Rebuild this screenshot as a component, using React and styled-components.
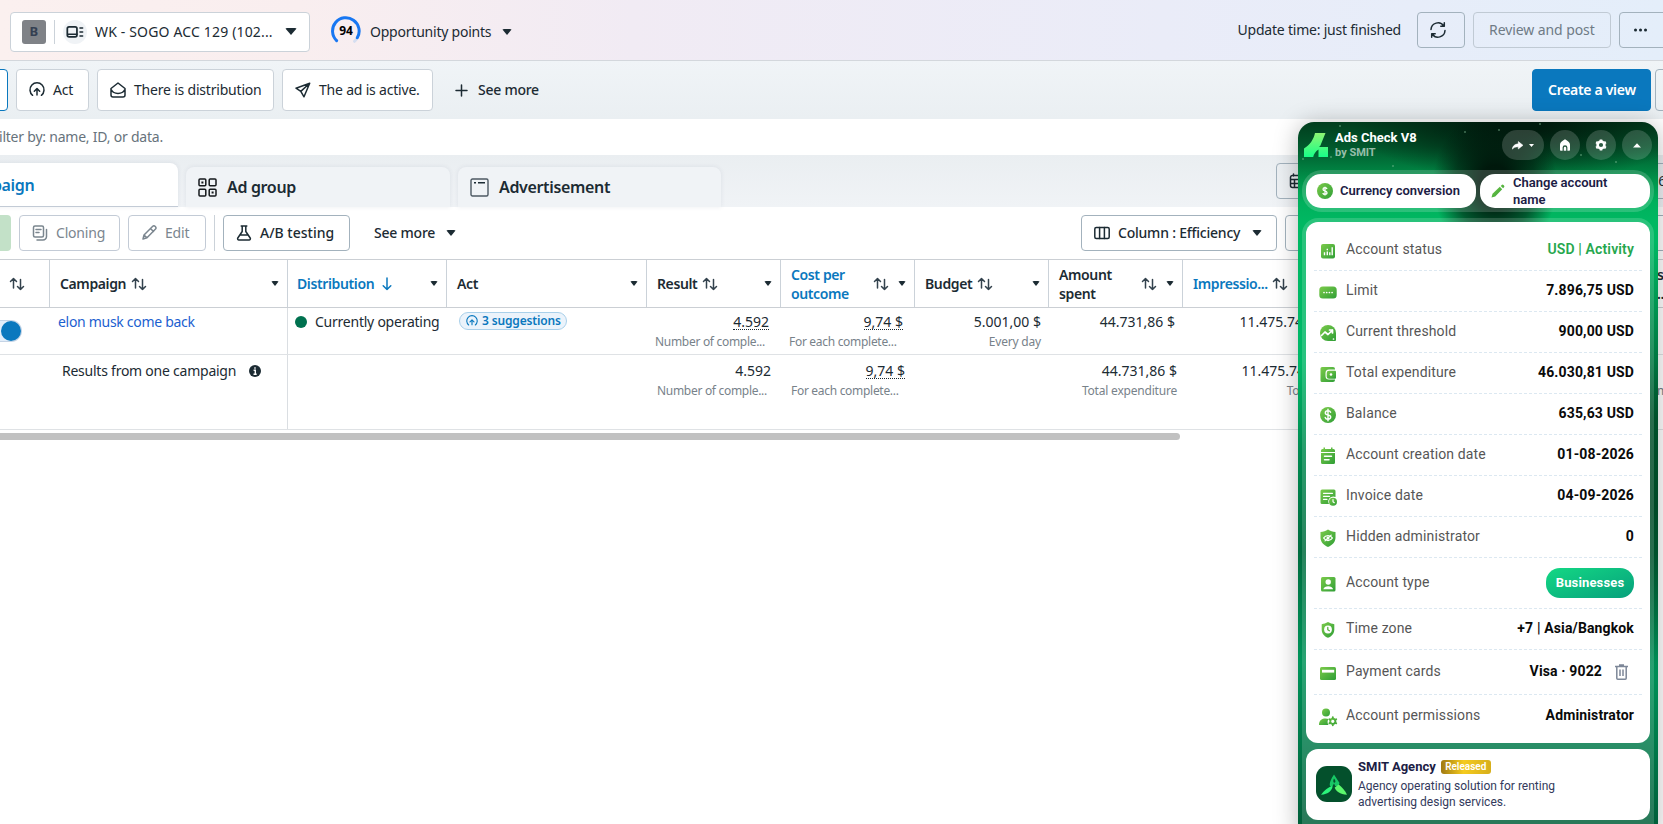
import React from 'react';
import styled, { createGlobalStyle } from 'styled-components';

const GlobalStyle = createGlobalStyle`
    * {
        box-sizing: border-box;
    }

    body {
        margin: 0;
        background: #fff;
        color: #1c2b33;
        font: 14px/20px "Noto Sans", "Open Sans", sans-serif;
        letter-spacing: -0.22px;
        overflow: hidden;
    }
`;

const Page = styled.div`
    position: relative;
    width: 1663px;
    height: 824px;
    overflow: hidden;
    white-space: nowrap;
`;

const Row = styled.div`
    display: flex;
    align-items: center;
`;

const TopBar = styled(Row)`
    height: 61px;
    padding: 0 0 1px 10px;
    border-bottom: 1px solid #d3d7dc;
    background: linear-gradient(90deg, #fbf0ef 0%, #f9eeef 18%, #f1ebf4 38%, #eaecf8 70%, #e4eefa 100%);
`;

const AccountSelect = styled(Row)`
    width: 300px;
    height: 40px;
    margin-top: 4px;
    padding-left: 11px;
    border: 1px solid #cbd2d9;
    border-radius: 4px;
    background: #fff;
    letter-spacing: 0.16px;
`;

const Badge = styled.span`
    width: 24px;
    height: 24px;
    border-radius: 3px;
    background: #7f8287;
    color: #343f52;
    font-size: 13px;
    font-weight: 700;
    line-height: 23px;
    text-align: center;
`;

const BadgeRule = styled.span`
    width: 1px;
    height: 24px;
    margin: 0 8px;
    background: #cbd2d9;
`;

const Round = styled(Row)`
    justify-content: center;
    width: 24px;
    height: 24px;
    margin-right: 8px;
    border-radius: 50%;
    background: #f0f3f6;
`;

const Caret = styled.span`
    width: 0;
    height: 0;
    flex: none;
    margin-left: ${props => props.$left || 0}px;
    border: ${props => props.$size || 5}px solid transparent;
    border-top: ${props => (props.$size || 5) + 1}px solid #1c2b33;
    border-bottom: 0;
    border-radius: 2px;
`;

const Score = styled(Row)`
    margin: 4px 0 0 21px;
`;

const Ring = styled.span`
    display: grid;
    width: 30px;
    height: 30px;
    margin: -1px 9px 0 0;
    place-items: center;
    color: #000;
    font-size: 12px;
    font-weight: 700;

    > * {
        grid-area: 1 / 1;
    }
`;

const Button = styled.div`
    display: flex;
    flex: none;
    align-items: center;
    gap: ${props => props.$gap || 8}px;
    width: ${props => props.$w}px;
    height: ${props => props.$h || 36}px;
    padding-left: ${props => props.$pad === undefined ? 12 : props.$pad}px;
    border: 1px solid ${props => props.$line || "#a3b2bd"};
    border-radius: 4px;
    background: ${props => props.$bg || "transparent"};
    color: ${props => props.$color || "#1c2b33"};
    font-weight: ${props => props.$weight || 400};
    letter-spacing: ${props => props.$track === undefined ? -0.2 : props.$track}px;
`;

const TopActions = styled(Row)`
    gap: 8px;
    margin: 0 -8px 0 auto;
`;

const UpdateTime = styled.span`
    margin-right: 8px;
`;

const ChipBar = styled(Row)`
    height: 58px;
    margin-left: -30px;
    gap: 8px;
    background: linear-gradient(#f0f4f7, #eaeff2);
`;

const SeeMoreViews = styled(Row)`
    gap: 10px;
    margin-left: 14px;
    letter-spacing: -0.25px;
    font-weight: 500;
`;

const ViewActions = styled(Row)`
    gap: 4px;
    margin: 0 -28px 0 auto;
`;

const Search = styled(Row)`
    justify-content: flex-end;
    width: 163px;
    height: 36px;
    color: #67737c;
`;

const TabBar = styled.div`
    display: flex;
    align-items: flex-end;
    gap: 8px;
    height: 52px;
    margin-left: -86px;
    background: linear-gradient(#eaeef1, #f0f3f6);
`;

const Tab = styled(Row)`
    width: ${props => props.$w || 264}px;
    height: ${props => props.$active ? 44 : 40}px;
    padding-left: ${props => props.$active ? 44 : 12}px;
    gap: 10px;
    border-radius: 8px 8px 0 0;
    background: ${props => props.$active ? "#fff" : "#f0f3f6"};
    border-bottom: ${props => props.$active ? "1px solid #c3cbd6" : "0"};
    box-shadow: 0 0 5px rgba(40, 60, 90, 0.09);
    color: ${props => props.$active ? "#0a78be" : "#1c2b33"};
    font-size: 16px;
    font-weight: 600;
    letter-spacing: -0.34px;
`;

const DateRange = styled(Button)`
    align-self: flex-start;
    margin: 8px -8px 0 auto;
    padding-right: 4px;

    span {
        margin-left: auto;
    }
`;

const Toolbar = styled(Row)`
    height: 53px;
    gap: 8px;
    padding-bottom: 1px;
    border-bottom: 1px solid #cbcfd4;
`;

const GreenButton = styled.div`
    width: 11px;
    height: 36px;
    border-radius: 0 4px 4px 0;
    background: #c3e1c8;
`;

const ToolRule = styled.span`
    width: 1px;
    height: 36px;
    background: #cbd2d9;
`;

const MoreMenu = styled(Row)`
    margin-left: 16px;
    font-weight: 500;
`;

const ColumnTools = styled(Row)`
    gap: 8px;
    margin: 0 -8px 0 auto;
`;

const Grid = styled.div`
    display: grid;
    grid-template-columns: 50px 238px 159px 200px repeat(8, 134px);
    height: ${props => props.$h}px;
    border-bottom: 1px solid ${props => props.$line || "#dfe2e5"};
`;

const HeadCell = styled.div`
    display: flex;
    align-items: center;
    gap: 4px;
    padding: 0 8px 0 ${props => props.$pad || 10}px;
    border-right: 1px solid #cbd2d9;
    color: ${props => props.$blue ? "#0a78be" : "#1c2b33"};
    font-weight: 600;
    line-height: 19px;
    letter-spacing: -0.38px;
    white-space: pre;

    svg {
        margin-left: ${props => props.$wrapped ? "auto" : "0.5px"};
        margin-right: ${props => props.$wrapped ? "5px" : "0"};
    }

    > span:last-child {
        margin-left: ${props => props.$wrapped ? "0" : "auto"};
    }
`;

const Cell = styled.div`
    padding: ${props => props.$pad || "4px 8px 0 8px"};
    border-right: ${props => props.$edge ? "1px solid #dadee2" : "0"};
    text-align: ${props => props.$left ? "left" : "right"};
    letter-spacing: ${props => props.$left ? -0.24 : 0}px;
`;

const Status = styled(Row)`
    gap: ${props => props.$gap || 8}px;
`;

const Dot = styled.span`
    width: 12px;
    height: 12px;
    border-radius: 50%;
    background: #00714f;
`;

const Link = styled.span`
    color: #1c5fd0;
    letter-spacing: -0.3px;
`;

const Suggestions = styled(Row)`
    width: 108px;
    height: 18px;
    padding-left: 6px;
    gap: 4px;
    border: 1px solid #a9d0ea;
    border-radius: 9px;
    background: #ebf3fb;
    color: #0a78be;
    font-size: 12px;
    font-weight: 600;
    letter-spacing: -0.15px;
`;

const Toggle = styled.div`
    display: flex;
    justify-content: flex-end;
    width: 22px;
    height: 22px;
    margin-top: 8px;
    border: 1px solid #c5d4e6;
    border-left: 0;
    border-radius: 0 11px 11px 0;
    background: #e3eefa;

    span {
        width: 20px;
        height: 20px;
        border-radius: 50%;
        background: #0a78be;
    }
`;

const Amount = styled.div`
    span {
        display: inline-block;
        height: 18px;
        margin-right: ${props => props.$tip ? 4 : 0}px;
        border-bottom: ${props => props.$dotted ? "1px dotted #1c2b33" : "0"};
    }
`;

const Note = styled.div`
    color: #78828a;
    font-size: 12px;
    letter-spacing: ${props => props.$cut ? -0.3 : -0.2}px;
    text-align: ${props => props.$cut ? "left" : "right"};
`;

const ScrollThumb = styled.div`
    width: 1180px;
    height: 7px;
    margin-top: 3px;
    border-radius: 0 4px 4px 0;
    background: #c1c1c1;
`;

/* floating extension panel */

const Panel = styled.div`
    position: absolute;
    left: 1298px;
    top: 122px;
    width: 360px;
    height: 720px;
    padding: 0 4px;
    border-radius: 16px;
    background:
        radial-gradient(ellipse 62px 75px at 197px 62px, rgba(0, 22, 11, 0.97) 25%, rgba(0, 26, 13, 0.6) 65%, rgba(0, 30, 15, 0) 100%),
        radial-gradient(ellipse 170px 60px at 225px 0, rgba(0, 24, 12, 0.95) 15%, rgba(0, 30, 15, 0) 100%),
        radial-gradient(ellipse 90px 220px at 100% 340px, rgba(0, 62, 30, 0.8) 20%, rgba(0, 70, 35, 0) 100%),
        linear-gradient(#013d1d 0, #01582c 25px, #00964c 60px, #00b05c 80px, #00b862 100px, #00b868 240px, #008a50 330px, #006c3f 430px, #00945a 540px, #00603a 700px);
    box-shadow: 0 2px 24px rgba(0, 0, 0, 0.28);
    font-family: Roboto, sans-serif;
    letter-spacing: 0;
`;

const StarField = styled.svg`
    position: absolute;
    left: 0;
    top: 0;
`;

const PanelHead = styled.div`
    display: flex;
    align-items: center;
    height: 48px;
    padding: 0 2px 2px;
    gap: 6px;
`;

const Brand = styled.div`
    margin: 0 auto 0 1px;
    color: #fff;
    font-size: 13px;
    font-weight: 700;
    line-height: 15px;

    small {
        display: block;
        color: rgba(255, 255, 255, 0.6);
        font-size: 11px;
        line-height: 15px;
    }
`;

const HeadButton = styled(Row)`
    justify-content: center;
    gap: 6px;
    width: ${props => props.$wide ? 42 : 30}px;
    height: 30px;
    border-radius: 15px;
    background: rgba(255, 255, 255, 0.17);
`;

const QuickActions = styled.div`
    display: flex;
    gap: 4px;
    height: 42px;
    padding: 4px;
    border-radius: 20px;
    background: rgba(255, 255, 255, 0.17);
`;

const QuickAction = styled(Row)`
    flex: 1;
    gap: ${props => props.$gap}px;
    padding: 0 0 1px 11px;
    border-radius: 15px;
    background: #fff;
    color: #1b2044;
    font-size: 13px;
    font-weight: 600;
    line-height: 17px;
    white-space: pre;
`;

const PanelBody = styled.div`
    display: flex;
    flex-direction: column;
    gap: 6px;
    height: 620px;
    margin-top: 6px;
    padding: 4px;
    border-radius: 16px 16px 0 0;
    background: rgba(255, 255, 255, 0.16);
`;

const InfoCard = styled.div`
    height: 521px;
    padding: 8px;
    border-radius: 12px;
    background: #fff;
`;

const InfoRow = styled.div`
    display: flex;
    align-items: center;
    height: ${props => props.$h || 41}px;
    padding: 0 8px 2px 4px;
    border-bottom: ${props => props.$last ? "0" : "1px dashed #dce8f1"};
    letter-spacing: 0.14px;

    > svg:first-child {
        margin: 4px 8px 0 0;
    }
`;

const Label = styled.span`
    flex: 1;
    color: #565656;
`;

const Value = styled.span`
    color: ${props => props.$green ? "#26a74e" : "#0a0a0a"};
    font-weight: ${props => props.$green ? 600 : 700};
`;

const Pill = styled.span`
    width: 88px;
    height: 30px;
    margin-top: 2px;
    border-radius: 14px;
    background: linear-gradient(160deg, #14d884, #06a07c);
    color: #fff;
    font-size: 13px;
    font-weight: 700;
    line-height: 29px;
    text-align: center;
`;

const Trash = styled.svg`
    margin: 2px 6px 0 13px;
`;

const AgencyCard = styled(Row)`
    flex: none;
    height: 71px;
    padding: 0 10px;
    gap: 6px;
    border-radius: 12px;
    background: #fff;
    color: #333a5c;
    font-size: 12px;
    line-height: 16px;
    white-space: pre;

    > svg {
        margin-top: -1px;
    }
`;

const AgencyTitle = styled(Row)`
    gap: 5px;
    margin-bottom: 3px;
    color: #1b2044;
    font-size: 13px;
    font-weight: 700;
`;

const Released = styled.span`
    width: 50px;
    height: 14px;
    border-radius: 3px;
    background: linear-gradient(90deg, #a07a12, #f5cb1d 45%, #d6ae1b);
    color: #fff;
    font-size: 10px;
    font-weight: 600;
    line-height: 14px;
    text-align: center;
`;

const Glyph = styled.svg`
    flex: none;
    fill: none;
    stroke-width: 1.5;
    stroke-linecap: round;
    stroke-linejoin: round;
`;

const Icon = ({ size = 16, w, box = 16, children, color = "currentColor" }) => (
    <Glyph width={w || size} height={size} viewBox={"0 0 " + (w ? w / size * box : box) + " " + box} stroke={color}>
        {children}
    </Glyph>
);

const Sort = () => (
    <Icon color="#33424d">
        <path d="M4.5 12V2.5M1.5 5.5l3-3 3 3M11.5 3.5v10M8.5 10.5l3 3 3-3" />
    </Icon>
);

const Boost = ({ size }) => (
    <Icon size={size}>
        <path d="M3.6 13.3a7 7 0 1 1 8.8 0M8 13V6.8M5.3 9.3 8 6.6l2.7 2.7" />
    </Icon>
);

const GREEN = "url(#leaf)";

const GreenIcon = ({ children }) => (
    <svg width="20" height="20" viewBox="0 0 20 20" fill={GREEN} strokeLinecap="round" strokeLinejoin="round">
        {children}
    </svg>
);

const icons = {
    status: <><rect x="3" y="3" width="14" height="14.5" rx="2" /><path d="M6.5 14.2v-3M9.3 14.2V10.5M9.3 7.8v1.4M11.8 14.2v-3M14.2 14.2V6.2" stroke="#fff" strokeWidth="1.4" strokeLinecap="butt" /></>,
    limit: <><rect x="1.3" y="4.5" width="17.4" height="12" rx="3.5" /><path d="M6 10.5h.01M8.700 10.5h.01M11.4 10.5h.01M14.1 10.5h.01" stroke="#fff" strokeWidth="1.7" /></>,
    threshold: <><path d="M10 2a8 8 0 0 1 8 8v7a1 1 0 0 1-1 1h-7a8 8 0 0 1 0-16z" /><path d="M3.5 12.5 7 9l3 2.5 4.5-4.300M11.5 7h3v3M15.5 16h.01" stroke="#fff" strokeWidth="1.7" fill="none" /></>,
    wallet: <><path d="M4 3h11a2 2 0 0 1 2 2v.5h-6a3.500 3.500 0 0 0-3.500 3.500v3a3.500 3.500 0 0 0 3.500 3.500h6v.5a2 2 0 0 1-2 2H4a1.500 1.500 0 0 1-1.500-1.500v-12A1.500 1.500 0 0 1 4 3z" /><path d="M11 6.700h6a1 1 0 0 1 1 1v6a1 1 0 0 1-1 1h-6a2.300 2.300 0 0 1-2.300-2.300V9A2.300 2.300 0 0 1 11 6.700z" /><circle cx="13" cy="10.5" r="1.3" fill="#fff" /></>,
    balance: <><circle cx="10" cy="10" r="8" /><path d="M12.6 7.300C12.200 6.200 11.200 5.800 10 5.800c-1.500 0-2.700.7-2.700 2.100 0 3 5.400 1.200 5.400 4.200 0 1.400-1.200 2.100-2.700 2.100-1.400 0-2.500-.5-2.800-1.700M10 4.300v11.400" fill="none" stroke="#fff" strokeWidth="1.4" /></>,
    calendar: <><path d="M4.5 3h1V1.500h1.500V3h6V1.500h1.500V3h1A1.500 1.500 0 0 1 17 4.500V6H3V4.500A1.500 1.500 0 0 1 4.500 3zM3 7h14v9.500a1.500 1.500 0 0 1-1.500 1.500h-11A1.500 1.500 0 0 1 3 16.500z" /><path d="M6.500 10.300h7M6.500 13.700h4.500" stroke="#fff" strokeWidth="1.5" /></>,
    invoice: <><path d="M4 2.500h12A1.500 1.500 0 0 1 17.500 4v6a5 5 0 0 0-6.500 7H4a1.500 1.500 0 0 1-1.500-1.500V4A1.500 1.500 0 0 1 4 2.500z" /><path d="M5.500 6.300h9M5.500 9.300h6M5.500 12.300h3.500" stroke="#fff" strokeWidth="1.3" /><circle cx="15" cy="14.7" r="4" /><path d="M15 12.500v2.200l1.300 1" fill="none" stroke="#fff" strokeWidth="1.2" /></>,
    hidden: <><path d="M10 1.500c2.400 1.400 4.600 2.200 7.500 2.600v5.400c0 4.400-3 7.600-7.500 9.400-4.500-1.800-7.500-5-7.500-9.400V4.100c2.900-.4 5.100-1.200 7.500-2.600z" /><path d="M5.600 10c2-3.300 6.800-3.300 8.800 0-2 3.300-6.800 3.300-8.800 0z" fill="none" stroke="#fff" strokeWidth="1.3" /><circle cx="10" cy="10" r="1.5" fill="#fff" /><path d="M7 12.800 13.200 7.200" stroke="#fff" strokeWidth="1.1" /></>,
    type: <><rect x="3" y="3" width="14.5" height="14.5" rx="1.5" /><circle cx="10.2" cy="8" r="2.7" fill="#fff" /><path d="M5.300 15.300c.8-4 9-4 9.800 0z" fill="#fff" /></>,
    zone: <><path d="M10 2c2.200 1.200 4 1.800 6.300 2.200v5.300c0 4-2.400 6.700-6.300 8.300-3.900-1.600-6.300-4.300-6.300-8.300V4.200C6 3.800 7.800 3.200 10 2z" /><circle cx="10" cy="9.5" r="3.9" fill="#fff" /><path d="M9.800 7.500v2.200l1.600 1" stroke="#54b13c" strokeWidth="1.3" fill="none" /></>,
    card: <><rect x="2" y="4" width="16" height="13" rx="1.5" /><path d="M4 8.200h12.200" stroke="#fff" strokeWidth="2.8" strokeLinecap="butt" /></>,
    user: <><circle cx="8" cy="5.5" r="4" /><path d="M1 18c0-4.800 3-6.500 6.500-6.500 1.300 0 2.300.2 3 .5-1.300 2-1.200 4.200 0 6z" /><circle cx="14.8" cy="14.3" r="2.6" fill="none" stroke={GREEN} strokeWidth="1.9" /><path d="M14.800 10.300v.8M14.800 17.500v.8M11.400 12.300l.7.400M17.500 15.900l.7.400M11.400 16.300l.7-.4M17.500 12.700l.7-.4" stroke="#4fae3c" strokeWidth="1.9" /></>
};

const info = [
    {icon: "status", label: "Account status", value: "USD | Activity", green: true},
    {icon: "limit", label: "Limit", value: "7.896,75 USD"},
    {icon: "threshold", label: "Current threshold", value: "900,00 USD"},
    {icon: "wallet", label: "Total expenditure", value: "46.030,81 USD"},
    {icon: "balance", label: "Balance", value: "635,63 USD"},
    {icon: "calendar", label: "Account creation date", value: "01-08-2026"},
    {icon: "invoice", label: "Invoice date", value: "04-09-2026"},
    {icon: "hidden", label: "Hidden administrator", value: "0"},
    {icon: "type", label: "Account type", pill: "Businesses", h: 51},
    {icon: "zone", label: "Time zone", value: "+7 | Asia/Bangkok"},
    {icon: "card", label: "Payment cards", value: "Visa · 9022", trash: true, h: 45},
    {icon: "user", label: "Account permissions", value: "Administrator", last: true}
];

const columns = [
    {name: "Result", sort: true},
    {name: "Cost per\noutcome", sort: true, wrapped: true, blue: true},
    {name: "Budget", sort: true},
    {name: "Amount\nspent", sort: true, wrapped: true},
    {name: "Impressio...", sort: true, blue: true},
    {name: ""},
    {name: ""},
    {name: "st\n...", pad: 72}
];

const stars = [[42, 4], [167, 10], [95, 44], [33, 35], [201, 8], [242, 2], [283, 33], [318, 40], [5, 37]];

const Header = () => (
    <TopBar>
        <AccountSelect>
            <Badge>B</Badge>
            <BadgeRule />
            <Round>
                <Icon w={18} size={14}>
                    <rect x="1.5" y="2" width="11" height="11.5" rx="2" strokeWidth="2" />
                    <path d="M2 10.5h10.500M16 3.500h3M16 8h3M16 12.500h3" strokeWidth="1.8" />
                </Icon>
            </Round>
            WK - SOGO ACC 129 (102...
            <Caret $left={12} $size={6} />
        </AccountSelect>
        <Score>
            <Ring>
                <svg width="30" height="30" viewBox="0 0 30 30" fill="none" strokeWidth="3" strokeLinecap="round">
                    <path d="M25 23.800l-1.500 1.500" stroke="#d5def0" />
                    <path d="M5.600 24.600A13.300 13.300 0 1 1 26.300 21.800" stroke="#1877f2" />
                </svg>
                <span>94</span>
            </Ring>
            Opportunity points
            <Caret $left={11} />
        </Score>
        <TopActions>
            <UpdateTime>Update time: just finished</UpdateTime>
            <Button $w={48} $pad={11}>
                <Icon size={18} box={18}>
                    <path d="M2 8.500A7 7 0 0 1 14.800 5M16 9.500A7 7 0 0 1 3.200 13M15.300 1.800V5.300h-3.500M2.700 16.200v-3.500h3.500" />
                </Icon>
            </Button>
            <Button $w={138} $pad={15} $line="#c0cad4" $color="#6f7b86" $track={-0.08}>Review and post</Button>
            <Button $w={52} $pad={13}>
                <Icon>
                    <path d="M2.500 8h.01M7.500 8h.01M12.500 8h.01" strokeWidth="3" />
                </Icon>
            </Button>
        </TopActions>
    </TopBar>
);

const Views = () => (
    <ChipBar>
        <Button $w={38} $h={42} $line="#0a78be" $bg="#fff" />
        <Button $w={73} $h={42} $line="#cbd2d9" $bg="#fff"><Boost />Act</Button>
        <Button $w={177} $h={42} $line="#cbd2d9" $bg="#fff">
            <Icon><path d="M1 6.500 8 1l7 5.500V13a2 2 0 0 1-2 2H3a2 2 0 0 1-2-2zM1.500 8c2 4.500 11 4.500 13 0" /></Icon>
            There is distribution
        </Button>
        <Button $w={151} $h={42} $line="#cbd2d9" $bg="#fff">
            <Icon><path d="M14.700 1.300 1 6.200l4.800 3.200L9 14.800zM14.700 1.300 5.800 9.400" /></Icon>
            The ad is active.
        </Button>
        <SeeMoreViews>
            <Icon size={13} box={13}><path d="M6.500 1v11M1 6.500h11" /></Icon>
            See more
        </SeeMoreViews>
        <ViewActions>
            <Button $w={119} $h={42} $pad={15} $line="#0a78be" $bg="#0a78be" $color="#fff" $weight={600} $track={-0.3}>Create a view</Button>
            <Button $w={36} $h={42} />
        </ViewActions>
    </ChipBar>
);

const Tabs = () => (
    <TabBar>
        <Tab $active>Campaign</Tab>
        <Tab>
            <svg width="19" height="19" viewBox="0 0 19 19" fill="none" stroke="#15191c" strokeWidth="1.5">
                <rect x="1" y="1" width="6.8" height="6.8" rx="1" />
                <rect x="11.2" y="1" width="6.8" height="6.8" rx="1" />
                <rect x="1" y="11.2" width="6.8" height="6.8" rx="1" />
                <rect x="11.2" y="11.2" width="6.8" height="6.8" rx="1" />
                <path d="M3.400 4.400h2M13.600 14.600h2" strokeWidth="2" />
            </svg>
            Ad group
        </Tab>
        <Tab $w={263}>
            <svg width="19" height="19" viewBox="0 0 19 19" fill="none" stroke="#4d5963" strokeWidth="1.4">
                <rect x="1" y="1" width="17" height="17" rx="1.5" />
                <path d="M4 4.700h2M8 4.700h7" stroke="#1c2b33" />
            </svg>
            Advertisement
        </Tab>
        <DateRange $w={395}>
            <Icon><path d="M1.500 4.500a2 2 0 0 1 2-2h9a2 2 0 0 1 2 2v8a2 2 0 0 1-2 2h-9a2 2 0 0 1-2-2zM1.500 6.500h13M1.500 10.500h13M5.500 6.500v8M10 6.500v8M4.500 1v2" /></Icon>
            <span>6</span>
        </DateRange>
    </TabBar>
);

const Tools = () => (
    <Toolbar>
        <GreenButton />
        <Button $w={101} $line="#c3cbd6" $color="#7b868f">
            <Icon><path d="M3 1h7a1.500 1.500 0 0 1 1.500 1.500v8A1.500 1.500 0 0 1 10 12H3a1.500 1.500 0 0 1-1.500-1.500v-8A1.500 1.500 0 0 1 3 1zM4 4.500h5M4 7.500h3M14.500 4.500v7a3.500 3.500 0 0 1-3.500 3.500H5" /></Icon>
            Cloning
        </Button>
        <Button $w={78} $line="#c3cbd6" $color="#7b868f">
            <Icon><path d="M2 14l1-4 8.500-8.500a1.800 1.800 0 0 1 2.800 2.800L6 12.800zM9.500 3.500l3 3M3 10l3 2.800" /></Icon>
            Edit
        </Button>
        <ToolRule />
        <Button $w={127} $weight={500} $track={0}>
            <Icon><path d="M5.200 1h5.600M6.200 1v5.500L1.800 13a1.300 1.300 0 0 0 1.200 2h10a1.300 1.300 0 0 0 1.200-2L9.800 6.500V1M4 10h8" /></Icon>
            A/B testing
        </Button>
        <MoreMenu>See more<Caret $left={11} /></MoreMenu>
        <ColumnTools>
            <Button $w={196} $weight={500} $track={-0.22}>
                <Icon><rect x="0.8" y="2.5" width="14.4" height="11" rx="1.5" /><path d="M5.600 2.500v11M10.400 2.500v11" /></Icon>
                Column : Efficiency
                <Caret $left={4} />
            </Button>
            <Button $w={386} />
        </ColumnTools>
    </Toolbar>
);

const Table = () => (
    <>
        <Grid $h={48} $line="#cbcfd4">
            <HeadCell $pad={8}><Sort /></HeadCell>
            <HeadCell>Campaign<Sort /><Caret $size={4} /></HeadCell>
            <HeadCell $blue $pad={9}>
                Distribution
                <Icon color="#0a78be"><path d="M8 2v11.500M4.200 9.700 8 13.500l3.800-3.800" /></Icon>
                <Caret $size={4} />
            </HeadCell>
            <HeadCell>Act<Caret $size={4} /></HeadCell>
            {columns.map((col, i) => (
                <HeadCell key={i} $blue={col.blue} $wrapped={col.wrapped} $pad={col.pad}>
                    {col.name}
                    {col.sort && <Sort />}
                    <Caret $size={4} />
                </HeadCell>
            ))}
        </Grid>
        <Grid $h={47}>
            <Cell $pad="4px 0" $left><Toggle><span /></Toggle></Cell>
            <Cell $left $edge $pad="4px 8px"><Link>elon musk come back</Link></Cell>
            <Cell $left $pad="4px 7px"><Status><Dot />Currently operating</Status></Cell>
            <Cell $left $pad="4px 12px"><Suggestions><Boost size={12} />3 suggestions</Suggestions></Cell>
            <Cell><Amount $tip $dotted><span>4.592</span></Amount><Note $cut>Number of comple...</Note></Cell>
            <Cell><Amount $tip $dotted><span>9,74 $</span></Amount><Note $cut>For each complete...</Note></Cell>
            <Cell><Amount><span>5.001,00 $</span></Amount><Note>Every day</Note></Cell>
            <Cell><Amount><span>44.731,86 $</span></Amount></Cell>
            <Cell $pad="4px 6px 0 0"><Amount><span>11.475.742</span></Amount></Cell>
        </Grid>
        <Grid $h={75}>
            <Cell />
            <Cell $left $edge $pad="6px 12px">
                <Status $gap={13}>
                    Results from one campaign
                    <svg width="12" height="12" viewBox="0 0 12 12">
                        <circle cx="6" cy="6" r="6" fill="#1c2b33" />
                        <path d="M4.600 5.200h1.700v4M4.500 9.200h3.200M6 2.200v1.600" stroke="#fff" strokeWidth="1.4" fill="none" />
                    </svg>
                </Status>
            </Cell>
            <Cell />
            <Cell />
            <Cell $pad="6px 6px 0 10px"><Amount $tip><span>4.592</span></Amount><Note $cut>Number of comple...</Note></Cell>
            <Cell $pad="6px 6px 0 10px"><Amount $tip $dotted><span>9,74 $</span></Amount><Note $cut>For each complete...</Note></Cell>
            <Cell />
            <Cell $pad="6px 6px 0 10px"><Amount><span>44.731,86 $</span></Amount><Note>Total expenditure</Note></Cell>
            <Cell $pad="6px 4px 0 10px"><Amount><span>11.475.742</span></Amount><Note>Total</Note></Cell>
            <Cell />
            <Cell />
            <Cell $pad="26px 5px 0 72px"><Note $cut>m</Note></Cell>
        </Grid>
        <ScrollThumb />
    </>
);

const AdsPanel = () => (
    <Panel>
        <StarField width="360" height="90">
            <defs>
                <linearGradient id="leaf" x1="0" y1="0" x2="1" y2="1">
                    <stop offset="0" stopColor="#7ccb4a" />
                    <stop offset="1" stopColor="#2f9e36" />
                </linearGradient>
                <linearGradient id="neon" x1="0" y1="0" x2="0" y2="1">
                    <stop offset="0" stopColor="#8df573" />
                    <stop offset="1" stopColor="#18ff88" />
                </linearGradient>
            </defs>
            {stars.map(([x, y]) => <circle key={x} cx={x} cy={y} r="0.8" fill="#8fc9a4" opacity="0.8" />)}
        </StarField>
        <PanelHead>
            <svg width="24" height="24" viewBox="0 0 24 24" fill="url(#neon)">
                <path d="M11 0h10.500l-5.200 12.800-1.300 1.200h9v10h-9.500v-7.500C11.500 18.500 9.800 21 9.200 24H0v-8.500C6 12 9.500 6.500 11 0z" />
            </svg>
            <Brand>Ads Check V8<small>by SMIT</small></Brand>
            <HeadButton $wide>
                <svg width="11" height="9" viewBox="0 0 11 9" fill="#fff"><path d="M6.300.5 11 4.300 6.300 8V5.800C3.500 5.800 1.700 6.500.3 8.300.5 5.200 2.700 3 6.300 2.800z" stroke="#fff" strokeWidth=".5" /></svg>
                <svg width="5" height="3" viewBox="0 0 5 3" fill="#fff"><path d="M0 0h5L2.500 3z" /></svg>
            </HeadButton>
            <HeadButton>
                <svg width="12" height="12" viewBox="0 0 12 12" fill="#fff"><path d="M6 .3c2.800 1.500 5 3 5 5.500V11a.8.800 0 0 1-.8.800H8.400V8.600a2.400 2.400 0 0 0-4.800 0v3.200H1.800A.8.800 0 0 1 1 11V5.800C1 3.300 3.200 1.800 6 .3z" /><path d="M4.800 11.800V8.900a1.200 1.200 0 0 1 2.400 0v2.900z" /></svg>
            </HeadButton>
            <HeadButton>
                <svg width="12" height="12" viewBox="0 0 12 12" fill="none" stroke="#fff"><circle cx="6" cy="6" r="3.4" strokeWidth="2.6" /><path d="M6 .4v1.500M6 10.100v1.500M1.150 3.200l1.300.75M9.550 8.050l1.300.75M1.150 8.800l1.300-.75M9.550 3.950l1.300-.75" strokeWidth="2.6" /></svg>
            </HeadButton>
            <HeadButton>
                <svg width="8" height="5" viewBox="0 0 8 5" fill="#fff"><path d="M4 .3 8 4.500H0z" /></svg>
            </HeadButton>
        </PanelHead>
        <QuickActions>
            <QuickAction $gap={7}>
                <svg width="16" height="16" viewBox="2 2 16 16" fill={GREEN}>
                    <circle cx="10" cy="10" r="8" />
                    <path d="M12 8c-.3-.9-1-1.300-2-1.300-1.200 0-2 .5-2 1.500 0 2.300 4 1.200 4 3.600 0 1-.8 1.600-2 1.600-1.100 0-1.900-.4-2.200-1.400M10 5.800v8.600" fill="none" stroke="#fff" strokeWidth="1.3" />
                </svg>
                Currency conversion
            </QuickAction>
            <QuickAction $gap={8}>
                <svg width="14" height="14" viewBox="0 0 14 14" fill={GREEN}><path d="M.5 13.500 1.500 9.800 8.800 2.800l2.400 2.400L4.200 12.500zM9.700 1.900l1-.9a1.300 1.300 0 0 1 1.800 0l.5.5a1.300 1.300 0 0 1 0 1.800l-.9 1z" /></svg>
                {"Change account\nname"}
            </QuickAction>
        </QuickActions>
        <PanelBody>
            <InfoCard>
                {info.map(row => (
                    <InfoRow key={row.label} $h={row.h} $last={row.last}>
                        <GreenIcon>{icons[row.icon]}</GreenIcon>
                        <Label>{row.label}</Label>
                        {row.pill ? <Pill>{row.pill}</Pill> : <Value $green={row.green}>{row.value}</Value>}
                        {row.trash && (
                            <Trash width="13" height="16" viewBox="0 0 13 16" fill="none" stroke="#7d8798" strokeWidth="1.5">
                                <path d="M0 2.500h13M4 1h5M1.800 2.500v11.700a1 1 0 0 0 1 1h7.400a1 1 0 0 0 1-1V2.500M5 5.500v6.500M8 5.500v6.500" />
                            </Trash>
                        )}
                    </InfoRow>
                ))}
            </InfoCard>
            <AgencyCard>
                <svg width="36" height="36" viewBox="0 0 36 36">
                    <rect width="36" height="36" rx="11" fill="#04502c" />
                    <path d="M18 8.500 23.500 17l-1.200 3h-3L18 17.500 16.500 20h-2.500c-1-3 1.500-8 4-11.500z" fill="#17c765" />
                    <path d="M5 28.800C8 24.500 12 21.500 16.500 19.500 17 24 12 28.500 5 28.800z" fill="#2bf57b" />
                    <path d="M31 28.800C24 28.500 19.500 25 18.700 21.500l4-3c3.500 2.800 6.500 6.200 8.300 10.300z" fill="#5cf76d" />
                    <path d="M18 12.500c1.500 2 2 3 .8 4.300-1.800 0-2-2.300-.8-4.300z" fill="#04502c" />
                </svg>
                <div>
                    <AgencyTitle>SMIT Agency<Released>Released</Released></AgencyTitle>
                    {"Agency operating solution for renting\nadvertising design services."}
                </div>
            </AgencyCard>
        </PanelBody>
    </Panel>
);

const App = () => (
    <Page>
        <GlobalStyle />
        <Header />
        <Views />
        <Search>filter by: name, ID, or data.</Search>
        <Tabs />
        <Tools />
        <Table />
        <AdsPanel />
    </Page>
);

export default App;
